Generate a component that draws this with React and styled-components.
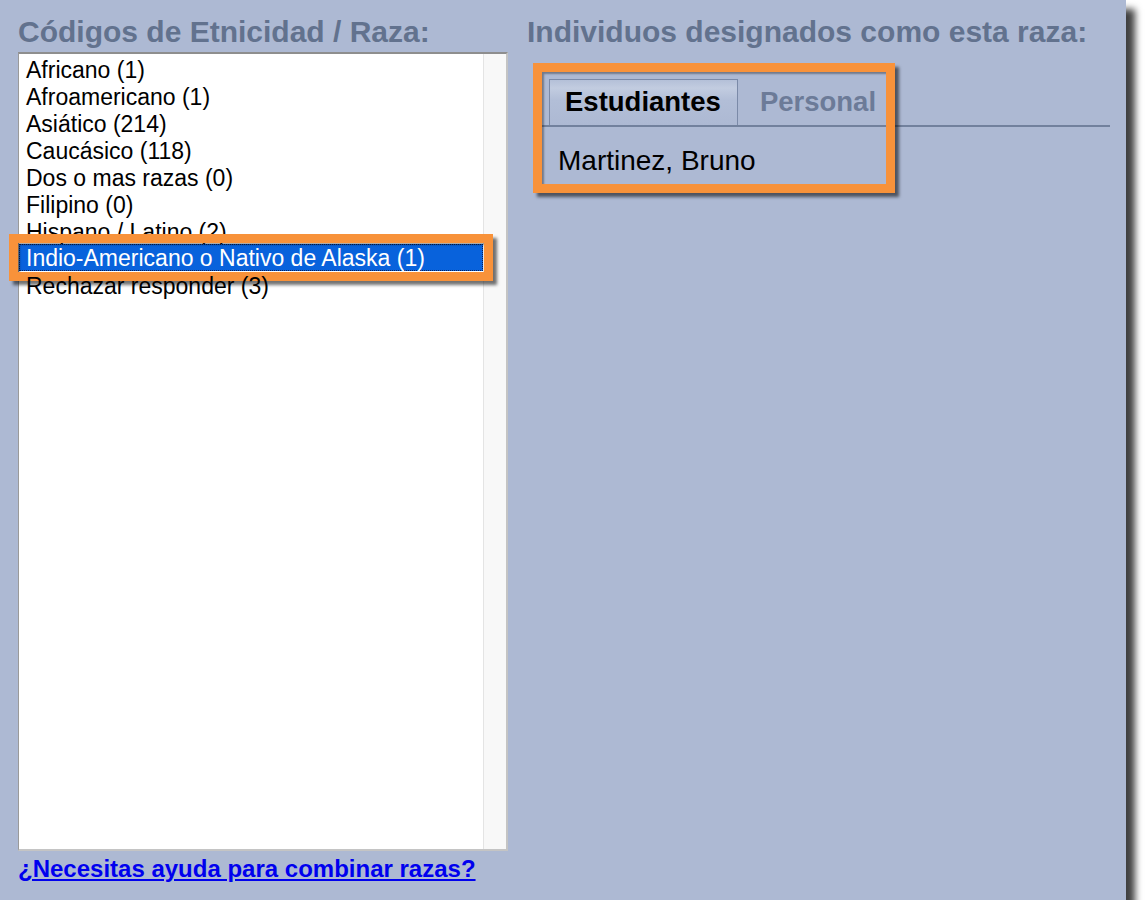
import React from 'react';
import styled, { createGlobalStyle } from 'styled-components';

const Global = createGlobalStyle`
body{
  margin:0;
  background:#ffffff;
  font-family:"Liberation Sans", Arial, sans-serif;
}
`;

const Panel = styled.div`
width:1126px;
height:900px;
box-sizing:border-box;
background:#adb9d3;
box-shadow:9px 9px 7px rgba(0,0,0,0.75);
display:flex;
gap:19px;
padding:14px 16px 0 18px;
`;

const Column = styled.div`
display:flex;
flex-direction:column;
width:${props => props.width ? props.width + 'px' : 'auto'};
flex:${props => props.width ? 'none' : '1'};
`;

const Title = styled.h2`
margin:0 0 2px 0;
font-size:30px;
line-height:36px;
font-weight:bold;
color:#62728e;
white-space:nowrap;
`;

const ListBox = styled.div`
display:flex;
height:799px;
box-sizing:border-box;
background:#ffffff;
border:2px solid #c4c4c4;
border-top-color:#8e8e8e;
border-left-width:1px;
border-left-color:#9a9a9a;
`;

const Items = styled.ul`
flex:1;
margin:0;
padding:1px 0 0 0;
list-style:none;
`;

const Item = styled.li`
position:relative;
height:27px;
box-sizing:border-box;
font-size:23px;
white-space:nowrap;
padding-top:${props => props.selected ? '2px' : '3px'};
line-height:${props => props.selected ? '23px' : '24px'};
padding-left:${props => props.selected ? '6px' : '7px'};
color:${props => props.selected ? '#ffffff' : '#000000'};
background:${props => props.selected ? '#0862dc' : 'transparent'};
border:${props => props.selected ? '1px dotted #0b1f55' : 'none'};
`;

const Callout = styled.div`
position:absolute;
pointer-events:none;
left:${props => props.left}px;
top:${props => props.top}px;
right:${props => props.right}px;
bottom:${props => props.bottom}px;
border:9px solid #f8923a;
box-shadow:4px 4px 3px rgba(0,0,0,0.55), inset 2px 2px 2px rgba(0,0,0,0.35);
`;

const Scrollbar = styled.div`
width:22px;
background:#f8f8f8;
border-left:1px solid #e4e4e4;
`;

const HelpLink = styled.a`
margin-top:4px;
font-size:24px;
line-height:28px;
font-weight:bold;
color:#0000ee;
text-decoration:underline;
white-space:nowrap;
`;

const TabWidget = styled.div`
position:relative;
margin:20px 0 0 15px;
padding-top:7px;
`;

const TabStrip = styled.div`
display:flex;
align-items:flex-end;
height:46px;
padding-left:7px;
border-bottom:2px solid #72819d;
`;

const Tab = styled.div`
height:46px;
box-sizing:border-box;
padding:0 16px 0 ${props => props.active ? 15 : 21}px;
font-size:27.5px;
font-weight:bold;
line-height:44px;
color:${props => props.active ? '#000000' : '#6c7b98'};
border:${props => props.active ? '1px solid #7b8aa8' : '1px solid transparent'};
border-bottom:none;
background:${props => props.active ? 'linear-gradient(#b4c0d8 0%, #c2cce0 18%, #b2bed7 45%, #adb9d3 100%)' : 'transparent'};
`;

const TabBody = styled.div`
padding:18px 0 6px 16px;
font-size:28px;
line-height:32px;
color:#000000;
`;

const races = [
  'Africano (1)',
  'Afroamericano (1)',
  'Asiático (214)',
  'Caucásico (118)',
  'Dos o mas razas (0)',
  'Filipino (0)',
  'Hispano / Latino (2)',
  'Indio-Americano o Nativo de Alaska (1)',
  'Rechazar responder (3)',
];

const App = () => {
  return (
    <>
      <Global />
      <Panel>
        <Column width={490}>
          <Title>Códigos de Etnicidad / Raza:</Title>
          <ListBox>
            <Items>
              {races.map((r, i) => (
                <Item key={r} selected={i === 7}>
                  {r}
                  {i === 7 && <Callout left={-11} top={-11} right={-11} bottom={-11} />}
                </Item>
              ))}
            </Items>
            <Scrollbar />
          </ListBox>
          <HelpLink href="#">¿Necesitas ayuda para combinar razas?</HelpLink>
        </Column>
        <Column>
          <Title>Individuos designados como esta raza:</Title>
          <TabWidget>
            <TabStrip>
              <Tab active>Estudiantes</Tab>
              <Tab>Personal</Tab>
            </TabStrip>
            <TabBody>Martinez, Bruno</TabBody>
            <Callout left={-9} top={-9} right={215} bottom={-10} />
          </TabWidget>
        </Column>
      </Panel>
    </>
  );
};

export default App;
